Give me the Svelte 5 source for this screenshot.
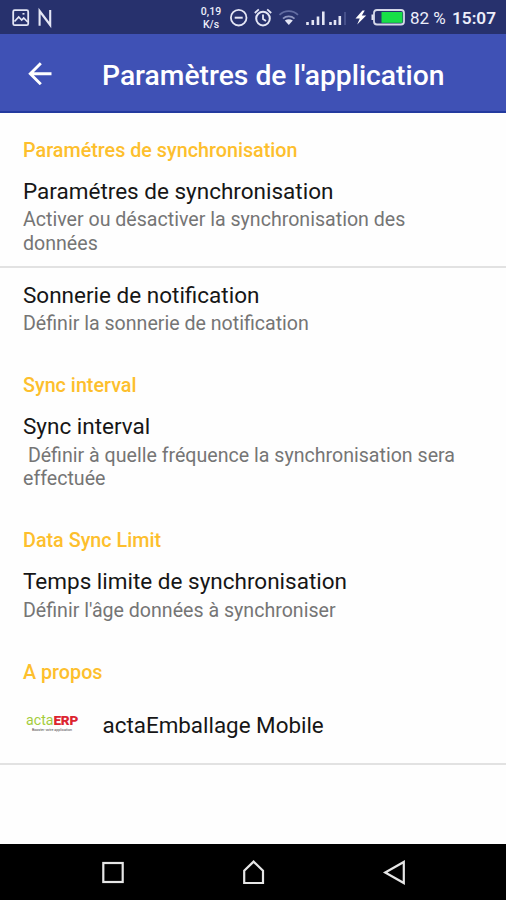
<script>
    const sections = [
        {
            name: 'Paramétres de synchronisation',
            items: [
                { title: 'Paramétres de synchronisation', summary: 'Activer ou désactiver la synchronisation des données', divider: true },
                { title: 'Sonnerie de notification', summary: 'Définir la sonnerie de notification' }
            ]
        },
        {
            name: 'Sync interval',
            items: [{ title: 'Sync interval', summary: ' Définir à quelle fréquence la synchronisation sera effectuée' }]
        },
        {
            name: 'Data Sync Limit',
            items: [{ title: 'Temps limite de synchronisation', summary: "Définir l'âge données à synchroniser" }]
        }
    ];
</script>

<div class="screen">
    <div class="status">
        <svg class="left" width="56" height="34" viewBox="0 0 56 34" fill="none" stroke="#e4e6f5">
            <rect x="13.2" y="10.2" width="15" height="15" rx="1.5" stroke-width="1.8" />
            <path d="M14.5 21.5l4.2-4.5 3 3 2-2 4 4" stroke-width="1.7" />
            <path d="M22.5 13.8h2" stroke-width="1.6" />
            <path d="M39.6 25.8V11L50.2 25V10" stroke-width="2.1" />
        </svg>
        <div class="speed"><span>0,19</span><span>K/s</span></div>
        <svg class="icons" width="182" height="34" viewBox="224 0 182 34" fill="none" stroke="#e4e6f5">
            <circle cx="238.7" cy="17.7" r="7.8" stroke-width="1.8" />
            <path d="M234.7 17.7h8" stroke-width="2" />
            <circle cx="263" cy="18.6" r="6.8" stroke-width="2" />
            <path d="M263 14.5v4.5l3 2M254.8 13l4-3.6M271.2 13l-4-3.6" stroke-width="1.8" />
            <path d="M279.5 14.8a13.5 13.5 0 0 1 18.5 0" stroke="#626ca2" stroke-width="1.8" />
            <path d="M283 18.6a8.5 8.5 0 0 1 11.5 0" stroke="#8e96c0" stroke-width="1.8" />
            <path d="M284.8 20.6q4-2.8 8 0l-4 4.4z" fill="#e4e6f5" stroke="none" />
            <path d="M307.5 25v-3M312.8 25v-5M318 25v-8.5M323.3 25V11.5" stroke-width="2.6" />
            <path d="M330.5 25v-3M335 25v-5M339.8 25v-9" stroke-width="2.6" />
            <path d="M345 25V12" stroke="#46508a" stroke-width="2" />
            <path d="M362.5 10.5l-7 8h4.3l-2.6 6 9-9h-4.4l3-5z" fill="#fff" stroke="none" />
            <rect x="374" y="10" width="30" height="14.5" rx="3" stroke="#d5d8e8" stroke-width="1.8" />
            <path d="M372.5 14.5v5.5" stroke-width="2" />
            <rect x="381.5" y="12" width="21" height="10.8" fill="#17df48" stroke="none" />
        </svg>
        <span class="percent">82 %</span>
        <span class="clock">15:07</span>
    </div>

    <header>
        <svg width="24" height="24" viewBox="0 0 24 24" fill="none" stroke="#fff" stroke-width="2.9">
            <path d="M23.5 12.7H2.8M12.8 2.2L2.3 12.7l10.5 10.5" />
        </svg>
        <h1>Paramètres de l'application</h1>
    </header>

    <main>
        {#each sections as section}
            <h2>{section.name}</h2>
            {#each section.items as item}
                <div class="item" class:divider={item.divider}>
                    <div class="title">{item.title}</div>
                    <div class="summary">{item.summary}</div>
                </div>
            {/each}
        {/each}
        <h2>A propos</h2>
        <div class="about">
            <div class="logo">
                <div class="brand">acta<b>ERP</b></div>
                <div class="slogan">Booster votre application</div>
            </div>
            <div class="title">actaEmballage Mobile</div>
        </div>
    </main>

    <nav>
        <svg width="506" height="56" viewBox="0 844 506 56" fill="none" stroke="#e6e6e6" stroke-width="2.2">
            <rect x="103.3" y="863" width="19.4" height="19" />
            <path d="M244.2 883V870.8l9.4-9.2 9.4 9.2V883z" />
            <path d="M403.8 862v21L385.2 872.5z" />
        </svg>
    </nav>
</div>

<style>
    :global(body) {
        margin: 0;
        background: #fff;
    }

    .screen {
        width: 506px;
        height: 900px;
        display: flex;
        flex-direction: column;
        overflow: hidden;
        background: #fefefe;
        font-family: Roboto, sans-serif;
    }

    svg {
        display: block;
        flex: none;
    }

    .status {
        height: 34px;
        display: flex;
        align-items: center;
        background: #27316d;
        color: #eceefa;
        white-space: nowrap;
    }

    .left {
        margin-right: 143px;
    }

    .speed {
        width: 24px;
        margin-right: 1px;
        display: flex;
        flex-direction: column;
        align-items: center;
        font-size: 10.5px;
        font-weight: 500;
        line-height: 12.4px;
        padding-top: 3px;
    }

    .percent {
        width: 42px;
        margin-left: 4px;
        padding-top: 2px;
        font-size: 17px;
    }

    .clock {
        padding-top: 2px;
        font-size: 17.2px;
        font-weight: 600;
    }

    /* Barre de titre */
    header {
        box-sizing: border-box;
        height: 79px;
        padding-left: 28px;
        display: flex;
        align-items: center;
        gap: 50px;
        background: #3f51b5;
        border-bottom: 2px solid #233a9f;
        color: #fff;
    }

    h1 {
        margin: 0;
        padding-top: 5px;
        font-size: 28.25px;
        font-weight: 500;
    }

    /* Liste des paramètres */
    main {
        flex: 1;
    }

    h2 {
        margin: 0;
        padding: 25.6px 23px 0;
        font-size: 19.75px;
        line-height: 23.3px;
        font-weight: 500;
        color: #fdbf2d;
    }

    .item {
        padding: 15.8px 24px 13px 23px;
    }

    .divider {
        padding-bottom: 11px;
        border-bottom: 2px solid #e2e2e2;
    }

    .divider + .item {
        padding-top: 13.8px;
    }

    .title {
        font-size: 22.5px;
        line-height: 26.4px;
        color: #161616;
    }

    .summary {
        margin-top: 4.2px;
        font-size: 19.6px;
        line-height: 23.3px;
        color: #757575;
        white-space: pre-wrap;
    }

    .about {
        box-sizing: border-box;
        height: 81px;
        padding-top: 4px;
        display: flex;
        align-items: center;
        border-bottom: 2px solid #e2e2e2;
    }

    .about .title {
        font-size: 22.4px;
    }

    .logo {
        width: 54px;
        margin: 0 22.5px 0 26px;
        padding-bottom: 4px;
        white-space: nowrap;
    }

    .brand {
        font-size: 14.2px;
        line-height: 15px;
        color: #a4cc3c;
    }

    .brand b {
        font-size: 13.6px;
        font-weight: 900;
        letter-spacing: -0.3px;
        color: #dc2430;
    }

    .slogan {
        padding-left: 6px;
        font-size: 3.6px;
        line-height: 5px;
        color: #444;
    }

    nav {
        height: 56px;
        background: #000;
    }
</style>
